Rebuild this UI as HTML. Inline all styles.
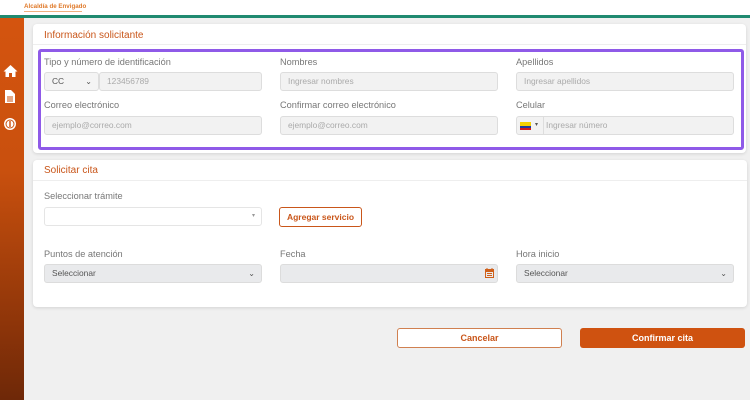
<!DOCTYPE html>
<html><head><meta charset="utf-8"><style>
*{box-sizing:border-box;margin:0;padding:0}
body{width:750px;height:400px;overflow:hidden;background:#f0f0f0;font-family:"Liberation Sans",sans-serif;position:relative}
.a{position:absolute}
.hdr{left:0;top:0;width:750px;height:15px;background:#fff}
.gl{left:0;top:15px;width:750px;height:3px;background:#1f8a70}
.side{left:0;top:18px;width:24px;height:382px;background:linear-gradient(#d4540f 0%,#c9500e 40%,#8e3509 80%,#6e2808 100%)}
.card{background:#fff;border-radius:4px;box-shadow:0 1px 3px rgba(0,0,0,.12)}
.t{color:#c9561a;font-size:10px}
.lbl{color:#777;font-size:9.2px}
.in{background:#f2f2f2;border:1px solid #ddd;border-radius:3px;height:19px;font-size:8.4px;color:#aaa;padding-left:7px;line-height:17px}
.sel{background:#e9eaec;border:1px solid #dcdcdc}
.chev{position:absolute;right:6px;top:3px;font-size:8px;color:#555}
</style></head><body>
<div class="a hdr"></div>
<div class="a" style="left:24px;top:3px;font-size:6.2px;color:#e07a2a;font-weight:bold">Alcaldía de Envigado</div>
<div class="a" style="left:24px;top:11px;width:58px;height:1px;background:#f0b080"></div>
<div class="a gl"></div>
<div class="a side"></div>
<svg class="a" style="left:3px;top:64px" width="15" height="14" viewBox="0 0 15 14"><path d="M7.5 1L0.5 7.5h2V13h3.5V9h3v4h3.5V7.5h2z" fill="#fff"/></svg>
<svg class="a" style="left:5px;top:90px" width="10" height="13" viewBox="0 0 10 13"><path d="M0 0h6l4 4v9H0z" fill="#fff"/><path d="M2 7h6M2 9h6M2 11h6" stroke="#c9500e" stroke-width="1"/></svg>
<svg class="a" style="left:3px;top:117px" width="14" height="14" viewBox="0 0 14 14"><circle cx="7" cy="7" r="6" fill="#fff"/><circle cx="7" cy="7" r="4" fill="none" stroke="#c9500e" stroke-width="1"/><rect x="6.3" y="4" width="1.4" height="6" fill="#c9500e"/></svg>

<div class="a card" style="left:33px;top:24px;width:713px;height:129px"></div>
<div class="a t" style="left:44px;top:30px">Información solicitante</div>
<div class="a" style="left:33px;top:44px;width:713px;height:1px;background:#eee"></div>
<div class="a" style="left:38px;top:49px;width:706px;height:101px;border:3px solid #8f5ae8;border-radius:3px"></div>

<div class="a lbl" style="left:44px;top:57px">Tipo y número de identificación</div>
<div class="a in" style="left:44px;top:72px;width:55px;color:#555;background:#f4f4f4">CC<span class="chev" style="top:0">⌄</span></div>
<div class="a in" style="left:99px;top:72px;width:163px">123456789</div>
<div class="a lbl" style="left:280px;top:57px">Nombres</div>
<div class="a in" style="left:280px;top:72px;width:218px">Ingresar nombres</div>
<div class="a lbl" style="left:516px;top:57px">Apellidos</div>
<div class="a in" style="left:516px;top:72px;width:218px">Ingresar apellidos</div>

<div class="a lbl" style="left:44px;top:100px">Correo electrónico</div>
<div class="a in" style="left:44px;top:116px;width:218px">ejemplo@correo.com</div>
<div class="a lbl" style="left:280px;top:100px">Confirmar correo electrónico</div>
<div class="a in" style="left:280px;top:116px;width:218px">ejemplo@correo.com</div>
<div class="a lbl" style="left:516px;top:100px">Celular</div>
<div class="a in" style="left:516px;top:116px;width:218px;padding-left:29px">Ingresar número</div>
<div class="a" style="left:543px;top:117px;width:1px;height:17px;background:#ddd"></div>
<div class="a" style="left:520px;top:122px;width:11px;height:8px;background:linear-gradient(#f5d000 0 50%,#1e3a9a 50% 75%,#d01c1c 75%)"></div>
<div class="a" style="left:535px;top:121px;font-size:6px;color:#555">▾</div>

<div class="a card" style="left:33px;top:160px;width:714px;height:147px"></div>
<div class="a t" style="left:44px;top:165px">Solicitar cita</div>
<div class="a" style="left:33px;top:180px;width:714px;height:1px;background:#eee"></div>
<div class="a lbl" style="left:44px;top:191px">Seleccionar trámite</div>
<div class="a in" style="left:44px;top:207px;width:218px;background:#fff;border-color:#e5e5e5"><span class="chev" style="top:0;font-size:6px;color:#999">▾</span></div>
<div class="a" style="left:279px;top:207px;width:83px;height:20px;border:1px solid #c9561a;border-radius:3px;font-size:8.5px;color:#c9561a;font-weight:bold;text-align:center;line-height:18px">Agregar servicio</div>

<div class="a lbl" style="left:44px;top:249px">Puntos de atención</div>
<div class="a in sel" style="left:44px;top:264px;width:218px;color:#555">Seleccionar<span class="chev" style="top:0">⌄</span></div>
<div class="a lbl" style="left:280px;top:249px">Fecha</div>
<div class="a in sel" style="left:280px;top:264px;width:218px"></div>
<svg class="a" style="left:485px;top:268px" width="9" height="10" viewBox="0 0 9 10"><rect x="0.5" y="1.5" width="8" height="8" fill="none" stroke="#d0601a"/><rect x="0.5" y="1.5" width="8" height="2.5" fill="#d0601a"/><path d="M2 0v2M7 0v2M2 5.5h5M2 7.5h5" stroke="#d0601a"/></svg>
<div class="a lbl" style="left:516px;top:249px">Hora inicio</div>
<div class="a in sel" style="left:516px;top:264px;width:218px;color:#555">Seleccionar<span class="chev" style="top:0">⌄</span></div>

<div class="a" style="left:397px;top:328px;width:165px;height:20px;border:1px solid #d08050;border-radius:3px;background:#fff;color:#c9561a;font-size:9px;font-weight:bold;text-align:center;line-height:18px">Cancelar</div>
<div class="a" style="left:580px;top:328px;width:165px;height:20px;border-radius:3px;background:#cf5210;color:#fff;font-size:9px;font-weight:bold;text-align:center;line-height:20px">Confirmar cita</div>
</body></html>
